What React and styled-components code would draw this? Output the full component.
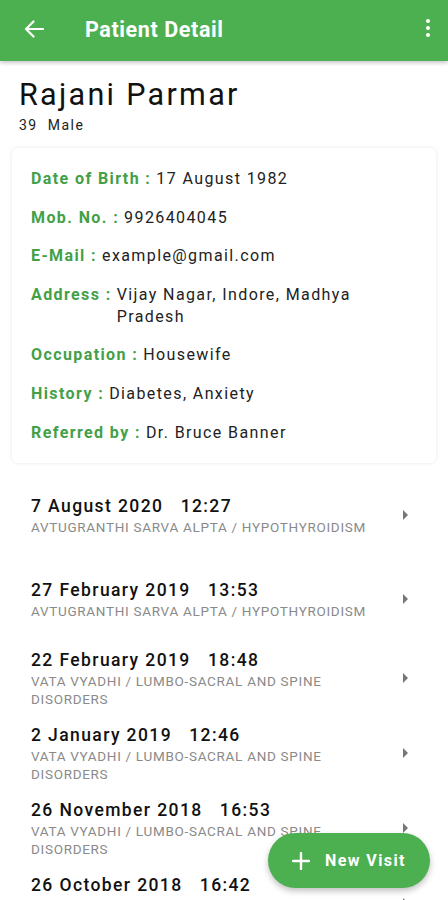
import styled, { createGlobalStyle } from "styled-components";

const GREEN = "#4caf50";

const details = [
  { label: "Date of Birth :", value: "17 August 1982" },
  { label: "Mob. No. :", value: "9926404045" },
  { label: "E-Mail :", value: "example@gmail.com" },
  { label: "Address :", value: "Vijay Nagar, Indore, Madhya Pradesh" },
  { label: "Occupation :", value: "Housewife" },
  { label: "History :", value: "Diabetes, Anxiety" },
  { label: "Referred by :", value: "Dr. Bruce Banner" },
];

const visits = [
  { date: "7 August 2020", time: "12:27", diag: "AVTUGRANTHI SARVA ALPTA / HYPOTHYROIDISM", height: 84 },
  { date: "27 February 2019", time: "13:53", diag: "AVTUGRANTHI SARVA ALPTA / HYPOTHYROIDISM", height: 84 },
  { date: "22 February 2019", time: "18:48", diag: "VATA VYADHI / LUMBO-SACRAL AND SPINE DISORDERS", height: 75 },
  { date: "2 January 2019", time: "12:46", diag: "VATA VYADHI / LUMBO-SACRAL AND SPINE DISORDERS", height: 75 },
  { date: "26 November 2018", time: "16:53", diag: "VATA VYADHI / LUMBO-SACRAL AND SPINE DISORDERS", height: 75 },
  { date: "26 October 2018", time: "16:42", diag: "VATA VYADHI / LUMBO-SACRAL AND SPINE DISORDERS", height: 75 },
];

const App = () => {
  return (
    <>
      <GlobalStyle />
      <Screen>
        <AppBar>
          <IconButton aria-label="back">
            <svg width="20" height="18" viewBox="0 0 20 18" fill="none">
              <path d="M19 9H2M9.5 1.5L2 9l7.5 7.5" stroke="#fff" strokeWidth="2.2" strokeLinecap="round" strokeLinejoin="round" />
            </svg>
          </IconButton>
          <Title>Patient Detail</Title>
          <MenuButton aria-label="more">
            <Dot />
            <Dot />
            <Dot />
          </MenuButton>
        </AppBar>

        <Header>
          <Name>Rajani Parmar</Name>
          <Sub>39&nbsp;&nbsp;Male</Sub>
        </Header>

        <Card>
          {details.map((d) => (
            <DetailRow key={d.label}>
              <Label>{d.label}</Label>
              <Value>{d.value}</Value>
            </DetailRow>
          ))}
        </Card>

        <VisitList>
          {visits.map((v) => (
            <VisitRow key={v.date} $height={v.height}>
              <VisitText>
                <VisitDate>{v.date}   {v.time}</VisitDate>
                <Diagnosis>{v.diag}</Diagnosis>
              </VisitText>
              <Caret />
            </VisitRow>
          ))}
        </VisitList>

        <Fab>
          <svg width="18" height="18" viewBox="0 0 18 18">
            <path d="M9 1v16M1 9h16" stroke="#fff" strokeWidth="2.4" strokeLinecap="round" />
          </svg>
          New Visit
        </Fab>
      </Screen>
    </>
  );
};

export default App;

const GlobalStyle = createGlobalStyle`
  html, body {
    margin: 0;
    padding: 0;
    background: #fff;
  }
  body {
    font-family: Roboto, "Liberation Sans", sans-serif;
    -webkit-font-smoothing: antialiased;
  }
`;

const Screen = styled.div`
  position: relative;
  width: 448px;
  height: 900px;
  overflow: hidden;
  background: #fff;
`;

const AppBar = styled.header`
  height: 61px;
  background: ${GREEN};
  display: flex;
  align-items: center;
  padding: 0 8px 0 16px;
  box-shadow: 0 2px 4px rgba(0, 0, 0, 0.22);
  position: relative;
  z-index: 1;
`;

const IconButton = styled.button`
  width: 36px;
  height: 36px;
  border: none;
  background: none;
  padding: 0;
  display: flex;
  align-items: center;
  justify-content: center;
  margin-top: -4px;
`;

const Title = styled.h1`
  flex: 1;
  margin: -3px 0 0 33px;
  color: #fff;
  font-size: 21.5px;
  font-weight: 700;
  letter-spacing: 0.6px;
`;

const MenuButton = styled.button`
  width: 24px;
  height: 36px;
  border: none;
  background: none;
  padding: 0;
  display: flex;
  flex-direction: column;
  align-items: center;
  justify-content: center;
  gap: 3px;
  margin-top: -6px;
`;

const Dot = styled.span`
  width: 4px;
  height: 4px;
  border-radius: 50%;
  background: #fff;
`;

const Header = styled.section`
  padding: 16px 19px 0;
`;

const Name = styled.h2`
  margin: 0;
  font-size: 30.5px;
  font-weight: 400;
  letter-spacing: 2.3px;
  color: #111;
  line-height: 36px;
`;

const Sub = styled.div`
  font-size: 14px;
  letter-spacing: 1.5px;
  color: #222;
  line-height: 18px;
  margin-top: 3px;
`;

const Card = styled.section`
  margin: 14px 12px 0;
  padding: 20px 40px 19px 19px;
  background: #fff;
  border-radius: 6px;
  box-shadow: 0 0 4px rgba(0, 0, 0, 0.1);
  display: flex;
  flex-direction: column;
  gap: 16.6px;
`;

const DetailRow = styled.div`
  display: flex;
  font-size: 16px;
  line-height: 22px;
  letter-spacing: 1.4px;
`;

const Label = styled.span`
  color: #43a047;
  font-weight: 700;
  white-space: pre;
  margin-right: 5px;
  flex-shrink: 0;
`;

const Value = styled.span`
  color: #222;
`;

const VisitList = styled.section`
  margin-top: 10px;
`;

const VisitRow = styled.div`
  height: ${(p) => p.$height}px;
  display: flex;
  align-items: center;
  padding: 0 40px 0 31px;
`;

const VisitText = styled.div`
  flex: 1;
  padding-right: 20px;
`;

const VisitDate = styled.div`
  font-size: 17.5px;
  font-weight: 500;
  letter-spacing: 1.4px;
  color: #111;
  line-height: 24px;
  white-space: pre;
`;

const Diagnosis = styled.div`
  font-size: 13.5px;
  letter-spacing: 0.7px;
  color: #8a8a8a;
  line-height: 18px;
`;

const Caret = styled.span`
  width: 0;
  height: 0;
  border-top: 5px solid transparent;
  border-bottom: 5px solid transparent;
  border-left: 5px solid #777;
`;

const Fab = styled.button`
  position: absolute;
  left: 268px;
  top: 833px;
  width: 162px;
  height: 55px;
  border: none;
  border-radius: 28px;
  background: ${GREEN};
  color: #fff;
  font-family: Roboto, "Liberation Sans", sans-serif;
  font-size: 16px;
  font-weight: 700;
  letter-spacing: 1.4px;
  display: flex;
  align-items: center;
  justify-content: center;
  gap: 15px;
  box-shadow: 0 3px 6px rgba(0, 0, 0, 0.25);
`;
